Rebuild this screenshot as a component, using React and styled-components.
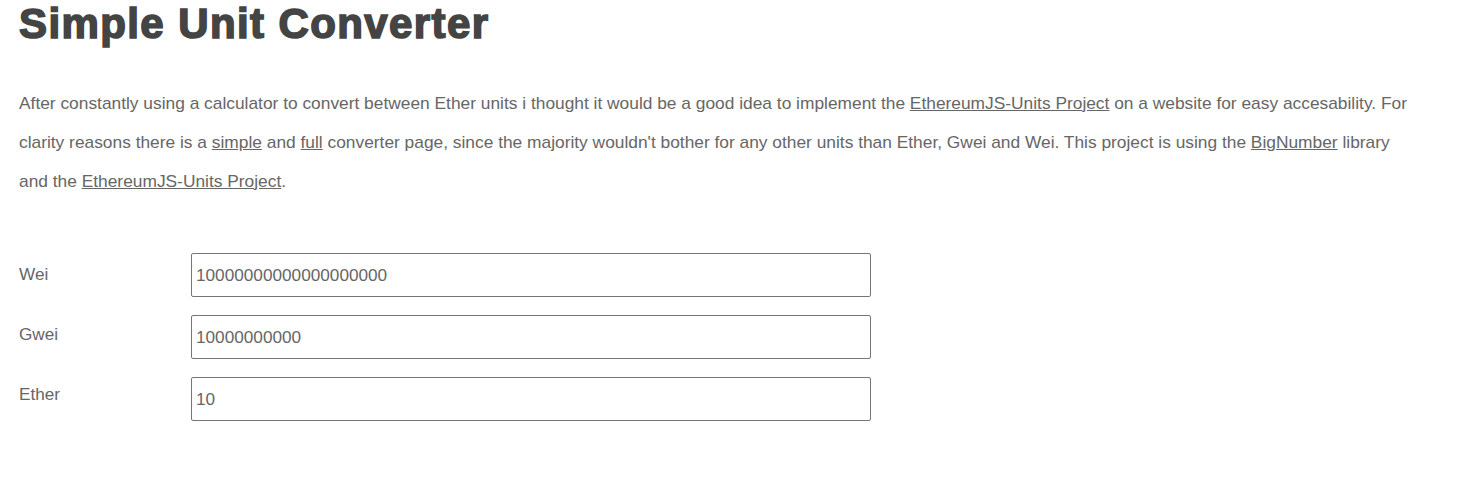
import React from "react";
import styled, { createGlobalStyle } from "styled-components";

const GlobalStyle = createGlobalStyle`
  body {
    margin: 0;
    background: #fff;
    font-family: "Liberation Sans", Arial, sans-serif;
  }
`;

const Page = styled.div`
  padding: 0 19px;
  color: #666;
`;

const Title = styled.h1`
  margin: 3px 0 0;
  font-size: 42px;
  line-height: 42px;
  font-weight: 700;
  letter-spacing: 1.4px;
  color: #444;
  -webkit-text-stroke: 1.6px #444;
`;

const Intro = styled.p`
  max-width: 1393px;
  margin: 38.5px 0 0;
  font-size: 17.35px;
  line-height: 39px;

  a {
    color: #666;
    text-decoration: underline;
  }
`;

const Form = styled.div`
  display: flex;
  margin-top: 52.5px;
`;

const Labels = styled.div`
  width: 172px;
  display: flex;
  flex-direction: column;
  gap: 40px;
  padding-top: 11px;
`;

const Label = styled.label`
  font-size: 17.2px;
  line-height: 20px;
`;

const Fields = styled.div`
  display: flex;
  flex-direction: column;
  gap: 18px;
`;

const Field = styled.input`
  box-sizing: border-box;
  width: 680px;
  height: 44px;
  padding: 0 4px;
  border: 1px solid #767676;
  border-radius: 2px;
  font-family: "Liberation Sans", Arial, sans-serif;
  font-size: 17.2px;
  color: #666;
  outline: none;
`;

const units = [
  { name: "Wei", value: "10000000000000000000" },
  { name: "Gwei", value: "10000000000" },
  { name: "Ether", value: "10" },
];

export default function App() {
  return (
    <Page>
      <GlobalStyle />
      <Title>Simple Unit Converter</Title>
      <Intro>
        After constantly using a calculator to convert between Ether units i thought it would be a
        good idea to implement the <a href="#">EthereumJS-Units Project</a> on a website for easy
        accesability. For clarity reasons there is a <a href="#">simple</a> and{" "}
        <a href="#">full</a> converter page, since the majority wouldn't bother for any other units
        than Ether, Gwei and Wei. This project is using the <a href="#">BigNumber</a> library and
        the <a href="#">EthereumJS-Units Project</a>.
      </Intro>
      <Form>
        <Labels>
          {units.map((u) => (
            <Label key={u.name}>{u.name}</Label>
          ))}
        </Labels>
        <Fields>
          {units.map((u) => (
            <Field key={u.name} defaultValue={u.value} />
          ))}
        </Fields>
      </Form>
    </Page>
  );
}
